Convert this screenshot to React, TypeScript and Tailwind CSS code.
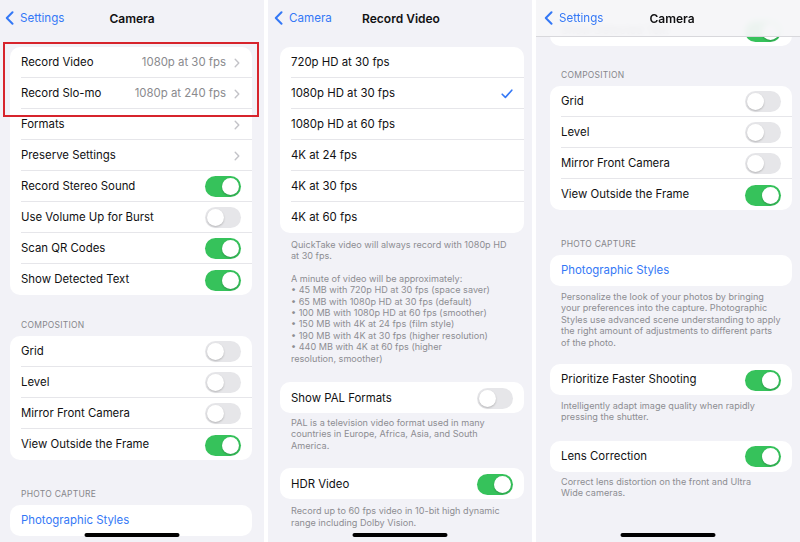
import clsx from 'clsx'

type Row = {
  label: string
  value?: string
  chevron?: boolean
  toggle?: boolean
  on?: boolean
  check?: boolean
  blue?: boolean
}

function Toggle({ on }: { on?: boolean }) {
  return (
    <span
      className={clsx(
        'flex h-[21px] w-[36px] shrink-0 items-center rounded-full p-[2px]',
        on ? 'justify-end bg-[#36c25b]' : 'justify-start bg-[#e6e6e9]'
      )}
    >
      <span className="h-[17px] w-[17px] rounded-full bg-white shadow-[0_1px_2px_rgba(0,0,0,0.22)]" />
    </span>
  )
}

function RowChevron() {
  return (
    <svg width="6" height="10" viewBox="0 0 6 10" className="mr-[1px] shrink-0">
      <path d="M1.2 1.2 L4.8 5 L1.2 8.8" fill="none" stroke="#c3c3c8" strokeWidth="1.4" strokeLinecap="round" strokeLinejoin="round" />
    </svg>
  )
}

function Check() {
  return (
    <svg width="12" height="10" viewBox="0 0 12 10" className="shrink-0">
      <path d="M1.2 5.2 L4.4 8.4 L10.8 1.2" fill="none" stroke="#3478f6" strokeWidth="1.6" strokeLinecap="round" strokeLinejoin="round" />
    </svg>
  )
}

function Card({ rows, className }: { rows: Row[]; className?: string }) {
  return (
    <div className={clsx('rounded-[10px] bg-white', className)}>
      {rows.map((r, i) => (
        <div key={r.label} className="flex h-[31px] pl-[11px]">
          <div
            className={clsx(
              'flex flex-1 items-center pr-[11px] pt-px',
              i < rows.length - 1 && 'border-b border-[#e6e6ea]'
            )}
          >
            <span className={clsx('flex-1 whitespace-nowrap text-[11.4px]', r.blue ? 'text-[#3478f6]' : 'text-[#111113]')}>
              {r.label}
            </span>
            {r.value && <span className="mr-[8px] whitespace-nowrap text-[11.4px] text-[#8a8a8e]">{r.value}</span>}
            {r.chevron && <RowChevron />}
            {r.toggle && <Toggle on={r.on} />}
            {r.check && <Check />}
          </div>
        </div>
      ))}
    </div>
  )
}

function Header({ children, className }: { children: string; className?: string }) {
  return (
    <div className={clsx('pl-[11px] text-[8.5px] uppercase leading-[10px] tracking-[0.03em] text-[#86868b]', className)}>
      {children}
    </div>
  )
}

function Footer({ lines, className }: { lines: string[]; className?: string }) {
  return (
    <p className={clsx('whitespace-nowrap px-[11px] text-[9.1px] leading-[11.4px] text-[#8d8d92]', className)}>
      {lines.map((l, i) => (
        <span key={i} className="block">
          {l}
        </span>
      ))}
    </p>
  )
}

function Nav({ back, title, className }: { back: string; title: string; className?: string }) {
  return (
    <div className={clsx('grid h-[36px] grid-cols-[1fr_auto_1fr] items-center pt-px', className)}>
      <div className="flex items-center gap-[6px] text-[11.6px] text-[#3478f6]">
        <svg width="9" height="14" viewBox="0 0 9 14">
          <path d="M7.5 1.2 L1.8 7 L7.5 12.8" fill="none" stroke="#3478f6" strokeWidth="2" strokeLinecap="round" strokeLinejoin="round" />
        </svg>
        {back}
      </div>
      <div className="text-[12px] font-semibold text-[#111113]">{title}</div>
      <div />
    </div>
  )
}

function HomeBar() {
  return <div className="absolute bottom-[5px] left-1/2 h-[4px] w-[95px] -translate-x-1/2 rounded-full bg-black" />
}

const cameraRows: Row[] = [
  { label: 'Record Video', value: '1080p at 30 fps', chevron: true },
  { label: 'Record Slo-mo', value: '1080p at 240 fps', chevron: true },
  { label: 'Formats', chevron: true },
  { label: 'Preserve Settings', chevron: true },
  { label: 'Record Stereo Sound', toggle: true, on: true },
  { label: 'Use Volume Up for Burst', toggle: true },
  { label: 'Scan QR Codes', toggle: true, on: true },
  { label: 'Show Detected Text', toggle: true, on: true },
]

const compositionRows: Row[] = [
  { label: 'Grid', toggle: true },
  { label: 'Level', toggle: true },
  { label: 'Mirror Front Camera', toggle: true },
  { label: 'View Outside the Frame', toggle: true, on: true },
]

const videoRows: Row[] = [
  { label: '720p HD at 30 fps' },
  { label: '1080p HD at 30 fps', check: true },
  { label: '1080p HD at 60 fps' },
  { label: '4K at 24 fps' },
  { label: '4K at 30 fps' },
  { label: '4K at 60 fps' },
]

export default function App() {
  return (
    <div className="grid h-[542px] w-[800px] grid-cols-[264px_264px_264px] gap-x-[4px] overflow-hidden bg-white font-[Inter,'Noto_Sans',sans-serif] antialiased">
      {/* Camera settings */}
      <section className="relative overflow-hidden bg-[#f2f2f7] pl-[10px] pr-[12px]">
        <Nav back="Settings" title="Camera" className="-ml-[5px] -mr-[7px]" />
        <Card rows={cameraRows} className="mt-[11px]" />
        <Header className="mt-[25px] mb-[6px]">Composition</Header>
        <Card rows={compositionRows} />
        <Header className="mt-[29px] mb-[6px]">Photo Capture</Header>
        <Card rows={[{ label: 'Photographic Styles', blue: true }]} />
        <div className="absolute left-[3px] top-[42px] h-[75px] w-[256px] border-2 border-[#d7242c]" />
        <HomeBar />
      </section>

      {/* Record video */}
      <section className="relative overflow-hidden bg-[#f2f2f7] pl-[12px] pr-[8px]">
        <Nav back="Camera" title="Record Video" className="-ml-[6px] -mr-[4px]" />
        <Card rows={videoRows} className="mt-[11px]" />
        <Footer
          className="mt-[6px]"
          lines={['QuickTake video will always record with 1080p HD', 'at 30 fps.']}
        />
        <Footer
          className="mt-[11px]"
          lines={[
            'A minute of video will be approximately:',
            '• 45 MB with 720p HD at 30 fps (space saver)',
            '• 65 MB with 1080p HD at 30 fps (default)',
            '• 100 MB with 1080p HD at 60 fps (smoother)',
            '• 150 MB with 4K at 24 fps (film style)',
            '• 190 MB with 4K at 30 fps (higher resolution)',
            '• 440 MB with 4K at 60 fps (higher',
            'resolution, smoother)',
          ]}
        />
        <Card rows={[{ label: 'Show PAL Formats', toggle: true }]} className="mt-[18px]" />
        <Footer
          className="mt-[4px]"
          lines={['PAL is a television video format used in many', 'countries in Europe, Africa, Asia, and South', 'America.']}
        />
        <Card rows={[{ label: 'HDR Video', toggle: true, on: true }]} className="mt-[17px]" />
        <Footer
          className="mt-[6px]"
          lines={['Record up to 60 fps video in 10-bit high dynamic', 'range including Dolby Vision.']}
        />
        <HomeBar />
      </section>

      {/* Camera settings, scrolled */}
      <section className="relative overflow-hidden bg-[#f2f2f7] pl-[14px] pr-[8px] pt-[15px]">
        <Card rows={[{ label: 'Show Detected Text', toggle: true, on: true }]} />
        <Header className="mt-[24px] mb-[6px]">Composition</Header>
        <Card rows={compositionRows} />
        <Header className="mt-[29px] mb-[6px]">Photo Capture</Header>
        <Card rows={[{ label: 'Photographic Styles', blue: true }]} />
        <Footer
          className="mt-[5px]"
          lines={[
            'Personalize the look of your photos by bringing',
            'your preferences into the capture. Photographic',
            'Styles use advanced scene understanding to apply',
            'the right amount of adjustments to different parts',
            'of the photo.',
          ]}
        />
        <Card rows={[{ label: 'Prioritize Faster Shooting', toggle: true, on: true }]} className="mt-[16px]" />
        <Footer className="mt-[5px]" lines={['Intelligently adapt image quality when rapidly', 'pressing the shutter.']} />
        <Card rows={[{ label: 'Lens Correction', toggle: true, on: true }]} className="mt-[18px]" />
        <Footer className="mt-[4px]" lines={['Correct lens distortion on the front and Ultra', 'Wide cameras.']} />
        <div className="absolute inset-x-0 top-0 border-b border-[#d8d8dc] bg-[#f5f5f8]/95 pl-[8px] backdrop-blur-[3px]">
          <Nav back="Settings" title="Camera" className="h-[34px]" />
        </div>
        <HomeBar />
      </section>
    </div>
  )
}
